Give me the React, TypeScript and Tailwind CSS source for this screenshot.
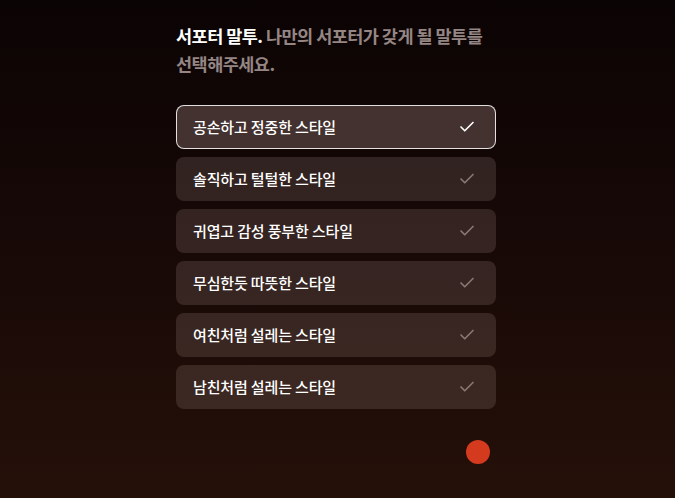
import { Check } from "lucide-react"

const styles = [
  "공손하고 정중한 스타일",
  "솔직하고 털털한 스타일",
  "귀엽고 감성 풍부한 스타일",
  "무심한듯 따뜻한 스타일",
  "여친처럼 설레는 스타일",
  "남친처럼 설레는 스타일",
]

export default function App() {
  const selected = 0

  return (
    <div
      className="w-full h-[498px] overflow-hidden bg-gradient-to-b from-[#0b0404] to-[#251009] flex justify-center pr-[3px]"
      style={{ fontFamily: '"Noto Sans CJK KR", "Noto Sans", sans-serif' }}
    >
      <div className="w-[320px] pt-[22px] flex flex-col">
        {/* Heading */}
        <h1 className="text-[17.5px] leading-[28px] font-bold tracking-[-0.03em] break-keep">
          <span className="text-white">서포터 말투.</span>{" "}
          <span className="text-[#958684]">나만의 서포터가 갖게 될 말투를 선택해주세요.</span>
        </h1>

        {/* Options */}
        <div className="mt-[27px] flex flex-col gap-2">
          {styles.map((label, i) => {
            const active = i === selected
            return (
              <button
                key={label}
                className={
                  active
                    ? "h-[44px] rounded-lg border border-white/85 bg-[#43322f] flex items-center justify-between pl-4 pr-[19px] text-left"
                    : "h-[44px] rounded-lg border border-transparent bg-[#fde3dc]/[0.13] flex items-center justify-between pl-4 pr-[19px] text-left"
                }
              >
                <span className="text-[15px] font-medium text-white tracking-[-0.01em]">{label}</span>
                <Check
                  className={active ? "w-[18px] h-[18px] text-white" : "w-[18px] h-[18px] text-[#8a7875]"}
                  strokeWidth={2.2}
                />
              </button>
            )
          })}
        </div>

        {/* Floating dot */}
        <div className="mt-[31px] flex justify-end pr-[6px]">
          <div className="w-6 h-6 rounded-full bg-[#d43a1e]" />
        </div>
      </div>
    </div>
  )
}
